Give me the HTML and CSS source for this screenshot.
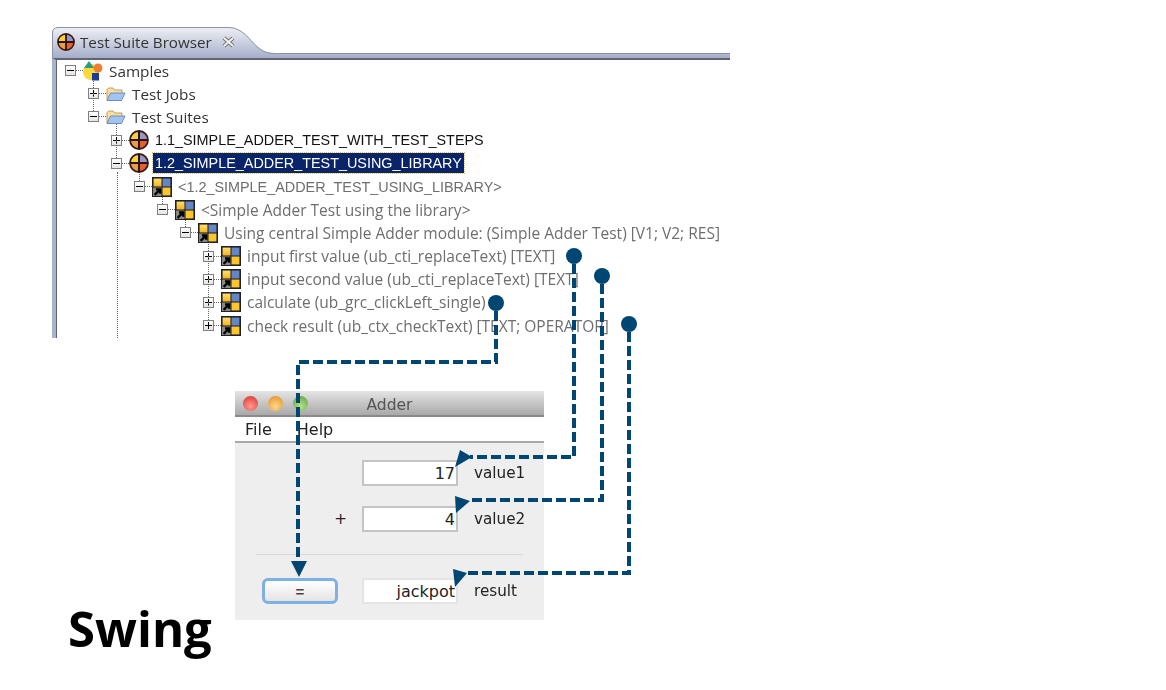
FILE: index.html
```html
<!DOCTYPE html>
<html lang="en">
<head>
    <meta charset="UTF-8">
    <meta name="viewport" content="width=device-width, initial-scale=1.0">
    <title>Test Suite Browser - Swing</title>
    <link rel="stylesheet" href="styles.css">
</head>
<body>
    <svg class="defs" width="0" height="0">
        <defs>
            <linearGradient id="tabfill" x1="0" y1="0" x2="0" y2="1">
                <stop offset="0" stop-color="#eef0f4"/>
                <stop offset="0.55" stop-color="#c6cddd"/>
                <stop offset="1" stop-color="#a5aecb"/>
            </linearGradient>
            <linearGradient id="tileyellow" x1="0" y1="0" x2="0" y2="1">
                <stop offset="0" stop-color="#ffe070"/>
                <stop offset="1" stop-color="#f5b41e"/>
            </linearGradient>
            <symbol id="suite" viewBox="0 0 20 20">
                <path d="M10 1A9 9 0 0 0 1 10H10Z" fill="#f7d23c"/>
                <path d="M10 1A9 9 0 0 1 19 10H10Z" fill="#9a94c8"/>
                <path d="M1 10A9 9 0 0 0 10 19V10Z" fill="#f09a48"/>
                <path d="M19 10A9 9 0 0 1 10 19V10Z" fill="#e4602f"/>
                <circle cx="10" cy="10" r="9" fill="none" stroke="#3a1a14" stroke-width="1.8"/>
                <path d="M10 1V19M1 10H19" stroke="#2a1510" stroke-width="2"/>
            </symbol>
            <symbol id="module" viewBox="0 0 19 19">
                <rect width="19" height="19" fill="#222"/>
                <rect x="1.500" y="1.500" width="7.500" height="7.500" fill="url(#tileyellow)"/>
                <rect x="10" y="1.500" width="7.500" height="7.500" fill="#6685c6"/>
                <rect x="10" y="10" width="7.500" height="7.500" fill="#fbc52e"/>
                <rect x="1" y="10" width="8" height="8" fill="#8a8a8a"/>
                <path d="M2.500 17L7 12.500M3.800 11.800H7.800V15.800" stroke="#000" stroke-width="2.200" fill="none"/>
            </symbol>
            <symbol id="folder" viewBox="0 0 20 16">
                <path d="M1 14V3.500L2.500 2H7L8.500 4H16V7" fill="#f9dfa2" stroke="#c49a58"/>
                <path d="M1 14.500L4.500 7H19L15.500 14.500Z" fill="#a3c3f0" stroke="#6a8cc0"/>
            </symbol>
            <symbol id="samples" viewBox="0 0 20 20">
                <circle cx="8" cy="11" r="8" fill="#f9d73e"/>
                <circle cx="15" cy="7" r="4.500" fill="#ef7f30"/>
                <path d="M6 0L11 7H1Z" fill="#2f9a80"/>
                <rect x="9" y="12" width="7" height="7.500" fill="#1f3a94"/>
            </symbol>
        </defs>
    </svg>

    <section class="browser">
        <header class="tab-bar">
            <svg class="tab-shape" width="678" height="31" viewBox="0 0 678 31">
                <path d="M0 31V6Q0 0 6 0H176C198 0 200 26 222 26H678V31Z" fill="url(#tabfill)"/>
                <path d="M0.500 31V6Q0.500 0.500 6 0.500H176C198 0.500 200 26.500 222 26.500H678" fill="none" stroke="#8b92a6"/>
            </svg>
            <svg class="tab-icon"><use href="#suite"/></svg>
            <span class="tab-title">Test Suite Browser</span>
            <svg class="tab-close" width="13" height="12" viewBox="0 0 13 12">
                <path d="M2 2L11 10M11 2L2 10" stroke="#777" stroke-width="4"/>
                <path d="M2 2L11 10M11 2L2 10" stroke="#f4f4f4" stroke-width="1.800"/>
            </svg>
        </header>
        <div class="tree">
            <span class="trunk"></span>
            <div class="row d0 open"><i class="exp"></i><svg class="icon"><use href="#samples"/></svg><span class="label strong">Samples</span></div>
            <div class="row d1"><i class="exp"></i><svg class="icon"><use href="#folder"/></svg><span class="label strong">Test Jobs</span></div>
            <div class="row d1 open"><i class="exp"></i><svg class="icon"><use href="#folder"/></svg><span class="label strong">Test Suites</span></div>
            <div class="row d2"><i class="exp"></i><svg class="icon"><use href="#suite"/></svg><span class="label caps black">1.1_SIMPLE_ADDER_TEST_WITH_TEST_STEPS</span></div>
            <div class="row d2 open"><i class="exp"></i><svg class="icon"><use href="#suite"/></svg><span class="label caps selected">1.2_SIMPLE_ADDER_TEST_USING_LIBRARY</span></div>
            <div class="row d3 open"><i class="exp"></i><svg class="icon"><use href="#module"/></svg><span class="label caps">&lt;1.2_SIMPLE_ADDER_TEST_USING_LIBRARY&gt;</span></div>
            <div class="row d4 open"><i class="exp"></i><svg class="icon"><use href="#module"/></svg><span class="label">&lt;Simple Adder Test using the library&gt;</span></div>
            <div class="row d5 open"><i class="exp"></i><svg class="icon"><use href="#module"/></svg><span class="label">Using central Simple Adder module: (Simple Adder Test) [V1; V2; RES]</span></div>
            <div class="row d6"><i class="exp"></i><svg class="icon"><use href="#module"/></svg><span class="label">input first value (ub_cti_replaceText) [TEXT]</span></div>
            <div class="row d6"><i class="exp"></i><svg class="icon"><use href="#module"/></svg><span class="label">input second value (ub_cti_replaceText) [TEXT]</span></div>
            <div class="row d6"><i class="exp"></i><svg class="icon"><use href="#module"/></svg><span class="label">calculate (ub_grc_clickLeft_single)</span></div>
            <div class="row d6"><i class="exp"></i><svg class="icon"><use href="#module"/></svg><span class="label">check result (ub_ctx_checkText) [TEXT; OPERATOR]</span></div>
        </div>
    </section>

    <div class="lower">
        <h1 class="swing">Swing</h1>
        <section class="adder">
            <div class="titlebar">
                <span class="light red"></span>
                <span class="light amber"></span>
                <span class="light green"></span>
                <span class="window-title">Adder</span>
            </div>
            <nav class="menubar"><span>File</span><span>Help</span></nav>
            <div class="form">
                <div class="form-row">
                    <span></span>
                    <span class="field">17</span>
                    <span class="name">value1</span>
                </div>
                <div class="form-row">
                    <span class="op">+</span>
                    <span class="field">4</span>
                    <span class="name">value2</span>
                </div>
                <hr class="sep">
                <div class="form-row">
                    <span class="btn-wrap"><button class="equals">=</button></span>
                    <span class="field result">jackpot</span>
                    <span class="name">result</span>
                </div>
            </div>
        </section>
    </div>

    <!-- connectors from the test steps to the swing fields -->
    <svg class="wires" width="1166" height="690" viewBox="0 0 1166 690">
        <g class="wire">
            <path d="M574 264V457H470"/>
            <path d="M602 284V500H470"/>
            <path d="M629 332V573H466"/>
            <path d="M496 311V362H298V562"/>
        </g>
        <g class="wire-end">
            <circle cx="574" cy="256" r="8"/>
            <circle cx="602" cy="276" r="8"/>
            <circle cx="496" cy="303" r="8"/>
            <circle cx="629" cy="324" r="8"/>
            <path d="M455 467L460 450L472 457Z"/>
            <path d="M455 496L470 501L456 513Z"/>
            <path d="M453 569L467 573L455 587Z"/>
            <path d="M291 561H307L299 577Z"/>
        </g>
    </svg>
</body>
</html>
```

FILE: styles.css
```css
html, body {
    margin: 0;
    padding: 0;
}
body {
    position: relative;
    width: 1166px;
    height: 690px;
    overflow: hidden;
    background-color: #fff;
    font-family: "Open Sans", Arial, sans-serif;
}
.defs {
    position: absolute;
}
.browser {
    width: 678px;
    height: 311px;
    margin: 27px 0 0 52px;
    overflow: hidden;
}
.tab-bar {
    position: relative;
    display: flex;
    align-items: center;
    height: 31px;
    padding: 0 0 2px 5px;
    box-sizing: border-box;
}
.tab-shape {
    position: absolute;
    left: 0;
    top: 0;
}
.tab-icon, .tab-title, .tab-close {
    position: relative;
    flex: none;
}
.tab-icon {
    width: 18px;
    height: 18px;
}
.tab-title {
    margin-left: 5px;
    font-size: 15.2px;
    color: #333;
    filter: blur(0.3px);
}
.tab-close {
    margin-left: 10px;
}
.tree {
    position: relative;
    height: 280px;
    border-left: 4px solid #aab3cc;
    border-top: 2px solid #5f6470;
    box-sizing: border-box;
    box-shadow: inset 1px 0 0 #5f6470;
}
.trunk {
    position: absolute;
    left: 61px;
    top: 112px;
    height: 170px;
    border-left: 1px dotted #666;
}
.row {
    position: relative;
    display: flex;
    align-items: center;
    height: 23.2px;
    white-space: nowrap;
}
.d0 { padding-left: 9px; margin-top: -1px; }
.d1 { padding-left: 32px; }
.d2 { padding-left: 55px; }
.d3 { padding-left: 78px; }
.d4 { padding-left: 101px; }
.d5 { padding-left: 124px; }
.d6 { padding-left: 147px; }
.exp {
    position: relative;
    flex: none;
    width: 9px;
    height: 9px;
    border: 1px solid #808080;
    background: linear-gradient(#fff, #e4e4e4);
}
.exp::before {
    content: "";
    position: absolute;
    left: 1px;
    right: 1px;
    top: 4px;
    height: 1px;
    background: #000;
}
.exp::after {
    content: "";
    position: absolute;
    top: 1px;
    bottom: 1px;
    left: 4px;
    width: 1px;
    background: #000;
}
.open .exp::after {
    display: none;
}
.row:not(.d0)::before {
    content: "";
    position: absolute;
    top: -12px;
    height: 18px;
    border-left: 1px dotted #666;
    margin-left: 5px;
}
.row::after {
    content: "";
    position: absolute;
    width: 7px;
    border-top: 1px dotted #666;
    margin-left: 11px;
}
.icon {
    flex: none;
    width: 20px;
    height: 20px;
    margin-left: 7px;
    position: relative;
    z-index: 1;
}
.label {
    margin-left: 4px;
    padding: 0 2px;
    font-size: 15.5px;
    line-height: 20px;
    color: #6e6e6e;
    filter: blur(0.3px);
}
.caps {
    font-family: "Liberation Sans", Arial, sans-serif;
    font-size: 14.4px;
}
.strong {
    color: #333;
    font-size: 15.3px;
}
.black {
    color: #111;
}
.selected {
    background-color: #0a246a;
    color: #fff;
    outline: 1px dotted #d8c070;
}
.lower {
    display: flex;
    padding-left: 68px;
    margin-top: 53px;
}
.swing {
    flex: none;
    width: 167px;
    margin: 204px 0 0;
    font-size: 49px;
    font-weight: 700;
    color: #000;
}
.adder {
    flex: none;
    width: 309px;
    height: 229px;
    background-color: #eee;
    font-family: "DejaVu Sans", sans-serif;
    color: #222;
}
.titlebar {
    position: relative;
    display: flex;
    align-items: center;
    gap: 10px;
    height: 26px;
    padding-left: 8px;
    box-sizing: border-box;
    background: linear-gradient(#e4e4e4, #a9a9a9);
    border-bottom: 2px solid #8a8a8a;
}
.light {
    width: 15px;
    height: 15px;
    border-radius: 50%;
}
.red { background: radial-gradient(circle at 50% 70%, #ff9a90, #d8302c); }
.amber { background: radial-gradient(circle at 50% 70%, #ffd98a, #e08a20); }
.green { background: radial-gradient(circle at 50% 70%, #b8e090, #58a038); }
.window-title {
    position: absolute;
    left: 0;
    right: 0;
    padding-top: 3px;
    text-align: center;
    font-size: 15.5px;
    color: #555;
    filter: blur(0.3px);
}
.menubar {
    display: flex;
    gap: 25px;
    height: 26px;
    align-items: center;
    padding: 1px 0 0 10px;
    box-sizing: border-box;
    background-color: #fff;
    border-bottom: 2px solid #a8a8a8;
    font-size: 16px;
    filter: blur(0.3px);
}
.form {
    padding-top: 17px;
}
.form-row {
    display: grid;
    grid-template-columns: 127px 96px 1fr;
    align-items: center;
    height: 26px;
    margin-bottom: 20px;
    font-size: 15.2px;
}
.form-row:last-child {
    margin-bottom: 0;
}
.op {
    text-align: right;
    padding-right: 15px;
}
.field {
    height: 26px;
    line-height: 24px;
    box-sizing: border-box;
    padding-right: 1px;
    text-align: right;
    font-size: 16px;
    background-color: #fff;
    border: 2px solid #c4c4c4;
}
.field.result {
    border-color: #e4e4e4;
}
.name {
    margin-left: 16px;
    filter: blur(0.3px);
}
.sep {
    height: 1px;
    margin: 22px 21px 23px;
    border: 0;
    background-color: #d8d8d8;
}
.btn-wrap {
    padding-left: 27px;
}
.equals {
    display: block;
    width: 76px;
    height: 26px;
    padding: 0;
    box-sizing: border-box;
    border: 3px solid #7fb0e4;
    border-radius: 6px;
    background: linear-gradient(#fff, #e4e4e4);
    font-size: 15px;
    font-weight: 700;
    color: #444;
}
.wires {
    position: absolute;
    left: 0;
    top: 0;
}
.wire path {
    fill: none;
    stroke: #004672;
    stroke-width: 4;
    stroke-dasharray: 10 4;
}
.wire-end {
    fill: #004672;
}
```
